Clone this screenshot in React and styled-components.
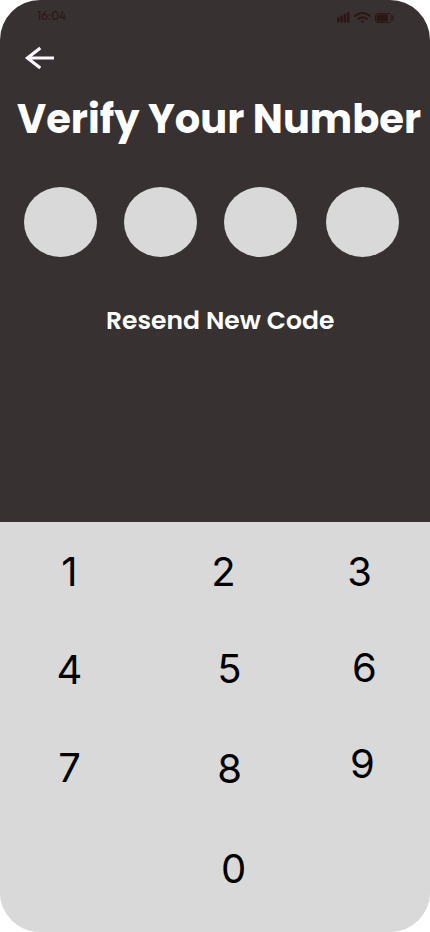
import React from "react";
import styled, { createGlobalStyle } from "styled-components";

const GlobalStyle = createGlobalStyle`
  body { margin: 0; background: #fff; }
  * { box-sizing: border-box; }
`;

const Screen = styled.main`
  width: 430px;
  height: 932px;
  display: flex;
  flex-direction: column;
  overflow: hidden;
  border-radius: 40px;
  background: linear-gradient(#373131 0 530px, #d9d9d9 530px);
  font-family: Poppins, Inter, sans-serif;
`;

const StatusBar = styled.header`
  display: flex;
  justify-content: space-between;
  height: 44px;
  padding: 8px 35px 0 37px;
  color: #2c1614;
`;

const Time = styled.time`
  font: 400 12px/16px Outfit, Urbanist, Figtree, Lato, sans-serif;
`;

const StatusIcons = styled.svg`
  width: 58px;
  height: 14px;
  margin-top: 3px;
`;

const BackButton = styled.button`
  width: 32px;
  height: 28px;
  margin-left: 23px;
  padding: 0;
  border: 0;
  background: none;
  color: #fef7ff;
  svg { display: block; }
`;

const Title = styled.h1`
  height: 60px;
  margin: 17px 0 0 17px;
  color: #fff;
  font-size: 40px;
  font-weight: 700;
  line-height: 60px;
  white-space: nowrap;
`;

const CodeFields = styled.div`
  display: grid;
  grid-template-columns: 100px 100px 102px 73px;
  margin: 38px 0 0 24px;
`;

const CodeField = styled.div`
  width: 73px;
  height: 70px;
  border-radius: 50%;
  background: #d9d9d9;
`;

const ResendButton = styled.button`
  align-self: flex-start;
  height: 37px;
  margin: 45px 0 0 106px;
  padding: 0;
  border: 0;
  background: none;
  color: #fff;
  font-family: inherit;
  font-size: 25px;
  font-weight: 600;
  line-height: 37px;
  white-space: nowrap;
`;

const Keypad = styled.section`
  height: 410px;
  margin-top: auto;
  padding-top: 25px;
  background: #d9d9d9;
`;

const KeyRow = styled.div`
  display: grid;
  grid-template-columns: ${({ $columns }) => $columns};
  height: ${({ $height }) => $height}px;
`;

const Key = styled.button`
  grid-column: ${({ $column }) => $column};
  width: 28px;
  height: 49px;
  margin: ${({ $drop }) => $drop || 0}px 0 0;
  padding: 0;
  border: 0;
  background: none;
  color: #000;
  font: 400 40px/49px Inter, sans-serif;
  text-align: center;
  justify-self: end;
`;

const rows = [
  { columns: "83.5px 154px 136px", height: 97, keys: [["1"], ["2"], ["3"]] },
  { columns: "83.5px 160px 135px", height: 96, keys: [["4", 1], ["5"], ["6", -1]] },
  { columns: "83.5px 160px 133px", height: 100, keys: [["7", 3], ["8", 4], ["9", -1]] },
  { columns: "84px 163.5px", height: 49, keys: [["0", 4, 2]] },
];

export default function App() {
  return (
    <>
      <GlobalStyle />
      <Screen>
        <StatusBar>
          <Time>16:04</Time>
          <StatusIcons viewBox="0 0 58 14" fill="none" stroke="currentColor">
            <path d="M1.2 7.2v3.4M4.4 5.6v5M7.8 3.8v6.8M11.2 2.2v8.4" strokeWidth="2.5" strokeLinecap="round" />
            <path d="M18 5q7.5-6 15 0M21 8q4.5-3.5 9 0" strokeWidth="2" strokeLinecap="round" />
            <path d="M23.5 10q2-1.5 4 0l-2 2z" fill="currentColor" stroke="none" />
            <rect x="38.5" y="2.5" width="15.5" height="9" rx="2" strokeWidth="1" />
            <rect x="39.5" y="3.5" width="11.5" height="7" rx="1" fill="currentColor" stroke="none" />
            <path d="M56 5v4" strokeWidth="1.3" strokeLinecap="round" />
          </StatusIcons>
        </StatusBar>
        <BackButton aria-label="Back">
          <svg width="32" height="28" viewBox="0 0 32 28" fill="none" stroke="currentColor" strokeWidth="2.8">
            <path d="M31 14H6" />
            <path d="M17.3 4.1L4.5 14l12.8 9.9" strokeWidth="3.2" />
          </svg>
        </BackButton>
        <Title>Verify Your Number</Title>
        <CodeFields>
          {[0, 1, 2, 3].map((i) => <CodeField key={i} />)}
        </CodeFields>
        <ResendButton>Resend New Code</ResendButton>
        <Keypad>
          {rows.map((row, index) => (
            <KeyRow key={index} $columns={row.columns} $height={row.height}>
              {row.keys.map(([digit, drop, column]) => (
                <Key key={digit} $drop={drop} $column={column}>{digit}</Key>
              ))}
            </KeyRow>
          ))}
        </Keypad>
      </Screen>
    </>
  );
}
